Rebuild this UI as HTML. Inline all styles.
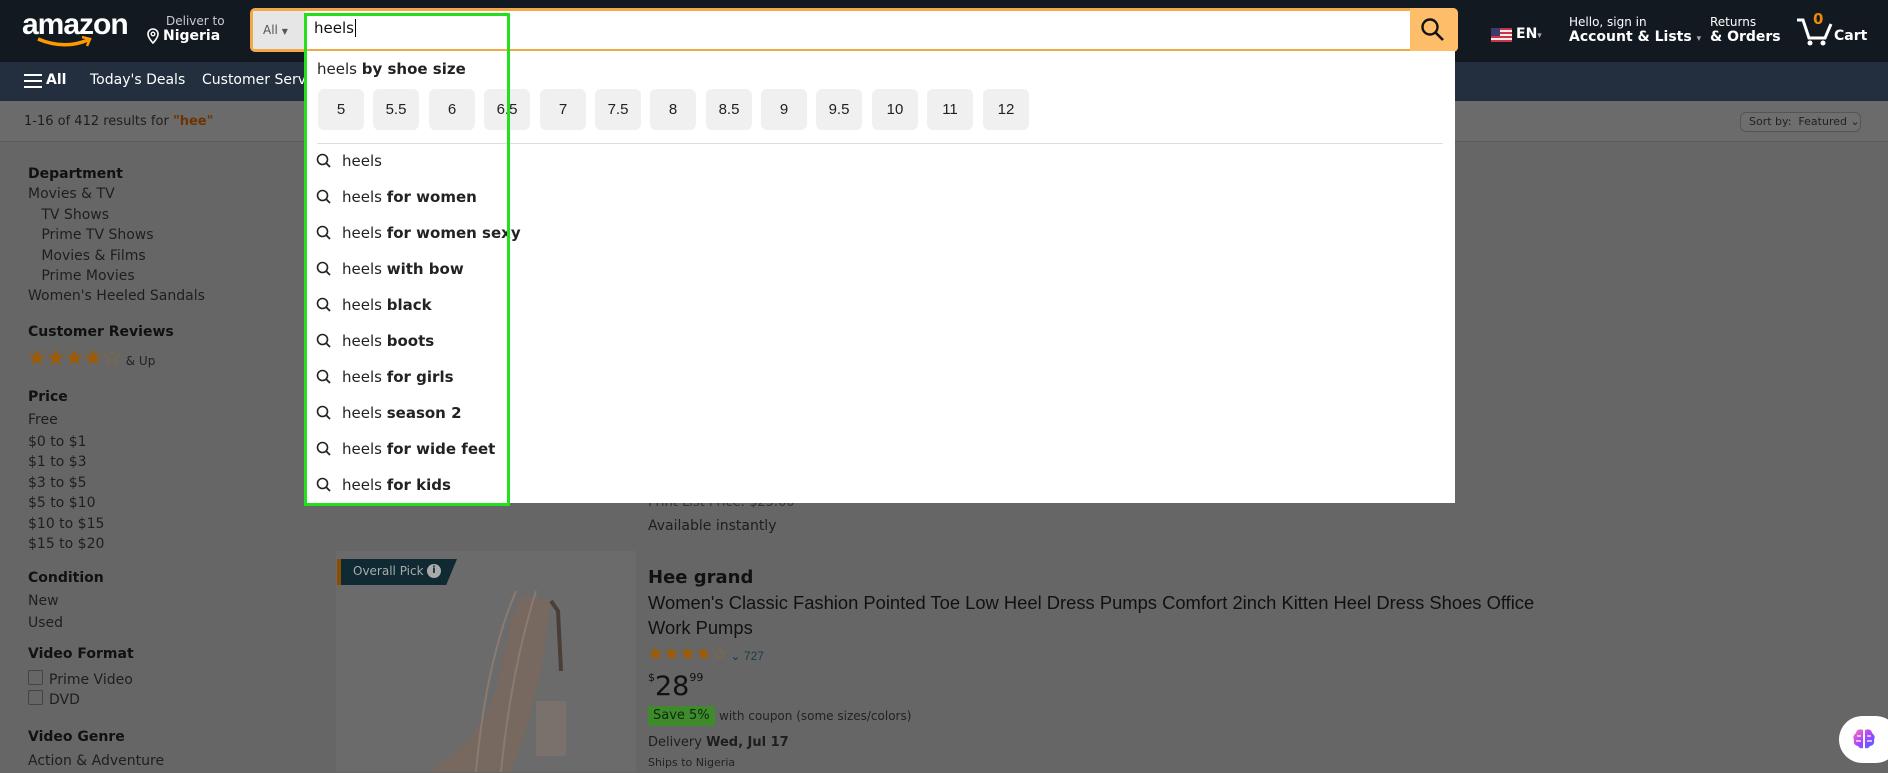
<!DOCTYPE html>
<html><head><meta charset="utf-8">
<style>
*{margin:0;padding:0;box-sizing:border-box}
body{width:1888px;height:772px;overflow:hidden;background:#666;font-family:"DejaVu Sans","Liberation Sans",sans-serif;position:relative;color:#1a1a1a}
.a{position:absolute;white-space:nowrap}
#hdr{position:absolute;left:0;top:0;width:1888px;height:62px;background:#131921}
#nav{position:absolute;left:0;top:62px;width:1888px;height:39px;background:#232f3e}
#res{position:absolute;left:0;top:101px;width:1888px;height:41px;background:#6b6b6b;border-bottom:1px solid #5a5a5a}
.w{color:#fff}
.side{font-size:14px;color:#1e1e1e}
.side b{font-size:14px;color:#111}
.sz{position:absolute;top:89px;width:46px;height:41px;background:#f0f0f0;border-radius:6px;font-size:15px;color:#222;text-align:center;line-height:41px;font-family:"Liberation Sans",sans-serif}
.sg{position:absolute;left:316px;width:1100px;font-size:15px;color:#222;height:36px;line-height:36px;white-space:nowrap}
.sg svg{position:absolute;left:0;top:10px}
.sg span{position:absolute;left:26px;top:0;white-space:nowrap}
.st{font-family:"Liberation Sans","DejaVu Sans",sans-serif;color:#a05a00}
</style></head><body>
<div id="hdr"></div>
<div class="a w" style="left:22px;top:8px;font:bold 30px 'Liberation Sans',sans-serif;letter-spacing:-1px">amazon</div>
<svg class="a" style="left:36px;top:36px" width="58" height="14"><path d="M2 3 Q28 14 52 4" stroke="#f90" stroke-width="3.5" fill="none"/><path d="M46 1 L54 3 L51 10" stroke="#f90" stroke-width="2.5" fill="none"/></svg>
<div class="a" style="left:166px;top:14px;font-size:12px;color:#ccc">Deliver to</div>
<svg class="a" style="left:147px;top:28px" width="12" height="16"><path d="M6 1 A5 5 0 0 1 11 6 C11 10 6 15 6 15 C6 15 1 10 1 6 A5 5 0 0 1 6 1Z" fill="none" stroke="#fff" stroke-width="1.6"/><circle cx="6" cy="6" r="1.8" fill="none" stroke="#fff" stroke-width="1.4"/></svg>
<div class="a w" style="left:163px;top:28px;font-size:14px;font-weight:bold">Nigeria</div>
<div class="a" style="left:250px;top:8px;width:1208px;height:44px;border:3px solid #f3a847;border-radius:5px;background:#fff"></div>
<div class="a" style="left:253px;top:11px;width:52px;height:38px;background:#e6e6e6;font-size:12px;color:#555;line-height:38px;padding-left:10px">All <span style="font-size:8px">▼</span></div>
<div class="a" style="left:314px;top:19px;font-size:15px;color:#111">heels<span style="border-left:1px solid #000;margin-left:1px"></span></div>
<div class="a" style="left:1410px;top:8px;width:48px;height:44px;background:#febd69;border-radius:0 5px 5px 0"></div>
<svg class="a" style="left:1420px;top:17px" width="26" height="26"><circle cx="10" cy="10" r="7.5" fill="none" stroke="#111" stroke-width="2.4"/><path d="M15.5 15.5 L23 23" stroke="#111" stroke-width="2.6"/></svg>
<svg class="a" style="left:1491px;top:28px" width="21" height="14"><rect width="21" height="14" fill="#eee"/><g fill="#c8344a"><rect y="0" width="21" height="2"/><rect y="4" width="21" height="2"/><rect y="8" width="21" height="2"/><rect y="12" width="21" height="2"/></g><rect width="9" height="8" fill="#3c3b6e"/></svg>
<div class="a w" style="left:1516px;top:26px;font-size:14px;font-weight:bold">EN<span style="font-size:9px;color:#aaa">▾</span></div>
<div class="a w" style="left:1569px;top:15px;font-size:12px">Hello, sign in</div>
<div class="a w" style="left:1569px;top:29px;font-size:14px;font-weight:bold">Account &amp; Lists <span style="font-size:9px;color:#aaa">▾</span></div>
<div class="a w" style="left:1710px;top:15px;font-size:12px">Returns</div>
<div class="a w" style="left:1710px;top:29px;font-size:14px;font-weight:bold">&amp; Orders</div>
<svg class="a" style="left:1795px;top:16px" width="40" height="30"><path d="M2 4 L8 4 L14 22 L30 22 L36 8" fill="none" stroke="#fff" stroke-width="3"/><circle cx="15" cy="27" r="2.5" fill="#fff"/><circle cx="28" cy="27" r="2.5" fill="#fff"/></svg>
<div class="a" style="left:1813px;top:10px;font-size:15px;font-weight:bold;color:#f08804">0</div>
<div class="a w" style="left:1834px;top:28px;font-size:14px;font-weight:bold">Cart</div>

<div id="nav"></div>
<svg class="a" style="left:24px;top:73px" width="18" height="16"><path d="M0 2H18M0 8H18M0 14H18" stroke="#fff" stroke-width="2"/></svg>
<div class="a w" style="left:46px;top:72px;font-size:14px;font-weight:bold">All</div>
<div class="a w" style="left:90px;top:72px;font-size:14px">Today's Deals</div>
<div class="a w" style="left:202px;top:72px;font-size:14px">Customer Service</div>

<div id="res"></div>
<div class="a" style="left:24px;top:114px;font-size:13px;color:#1e1e1e">1-16 of 412 results for <b style="color:#6b3400">"hee"</b></div>
<div class="a" style="left:1740px;top:112px;width:121px;height:20px;background:#6e6e6e;border:1px solid #555;border-radius:6px;font-size:11px;color:#222;line-height:18px;padding-left:8px">Sort by:&nbsp; Featured ⌄</div>

<div class="a side" style="left:28px;top:164px;line-height:20.4px">
<b>Department</b><br>Movies &amp; TV<br>&nbsp;&nbsp;&nbsp;TV Shows<br>&nbsp;&nbsp;&nbsp;Prime TV Shows<br>&nbsp;&nbsp;&nbsp;Movies &amp; Films<br>&nbsp;&nbsp;&nbsp;Prime Movies<br>Women's Heeled Sandals</div>
<div class="a side" style="left:28px;top:324px"><b>Customer Reviews</b></div>
<div class="a st" style="left:27px;top:345px;font-size:22px;letter-spacing:-1px">★★★★<span style="color:#8a6a3a">☆</span> <span style="font-size:12px;color:#222;letter-spacing:0;font-family:'DejaVu Sans',sans-serif">&amp; Up</span></div>
<div class="a side" style="left:28px;top:387px;line-height:20.5px"><b>Price</b><br><span style="line-height:24px">Free</span><br>$0 to $1<br>$1 to $3<br>$3 to $5<br>$5 to $10<br>$10 to $15<br>$15 to $20</div>
<div class="a side" style="left:28px;top:568px;line-height:20.5px"><b>Condition</b><br><span style="line-height:24px">New</span><br>Used</div>
<div class="a side" style="left:28px;top:646px"><b>Video Format</b></div>
<div class="a" style="left:28px;top:670px;width:15px;height:15px;border:1px solid #444;border-radius:2px"></div>
<div class="a" style="left:28px;top:690px;width:15px;height:15px;border:1px solid #444;border-radius:2px"></div>
<div class="a side" style="left:49px;top:670px;line-height:20px">Prime Video<br>DVD</div>
<div class="a side" style="left:28px;top:725px;line-height:24px"><b>Video Genre</b><br>Action &amp; Adventure</div>

<div class="a" style="left:336px;top:551px;width:300px;height:221px;background:#6b6b6b"></div>
<div class="a" style="left:337px;top:559px;width:120px;height:26px;background:#0f2a33;clip-path:polygon(0 0,100% 0,91% 100%,0 100%);border-left:4px solid #8a4f00"></div>
<div class="a" style="left:353px;top:564px;font-size:12px;color:#aaa">Overall Pick</div>
<div class="a" style="left:427px;top:564px;width:14px;height:14px;border-radius:50%;background:#aaa;color:#0f2a33;font-size:10px;text-align:center;line-height:14px;font-weight:bold">i</div>
<svg class="a" style="left:336px;top:551px" width="300" height="221"><path d="M185 45 L175 70 L160 140 Q145 180 120 200 L95 221 L175 221 L190 180 L205 120 L215 50 Z" fill="#776860"/><rect x="200" y="150" width="30" height="55" fill="#7a716c"/><path d="M215 50 L222 60 L225 120" stroke="#4a3e38" stroke-width="4" fill="none"/><path d="M180 40 Q150 110 140 221" stroke="#8a7a70" stroke-width="2" fill="none"/><path d="M200 40 Q175 120 165 221" stroke="#8a7a70" stroke-width="2" fill="none"/></svg>

<div class="a" style="left:648px;top:495px;font-size:13px;color:#333">Print List Price: $25.00</div>
<div class="a" style="left:648px;top:518px;font-size:14px;color:#1e1e1e">Available instantly</div>
<div class="a" style="left:648px;top:567px;font-size:18px;font-weight:bold;color:#111">Hee grand</div>
<div class="a" style="left:648px;top:591px;font-size:18px;color:#111;line-height:25px;font-family:'Liberation Sans',sans-serif;transform:scaleX(1.02);transform-origin:left">Women's Classic Fashion Pointed Toe Low Heel Dress Pumps Comfort 2inch Kitten Heel Dress Shoes Office<br>Work Pumps</div>
<div class="a st" style="left:647px;top:643px;font-size:19px;letter-spacing:-1px">★★★★<span style="color:#8a6a3a">☆</span><span style="font-size:12px;color:#1c3a4a;letter-spacing:0"> ⌄ 727</span></div>
<div class="a" style="left:648px;top:671px;color:#111"><span style="font-size:11px;vertical-align:top">$</span><span style="font-size:27px">28</span><span style="font-size:11px;vertical-align:top">99</span></div>
<div class="a" style="left:648px;top:706px;width:67px;height:20px;background:#3e8a2c;color:#0d2a0a;font-size:13px;line-height:20px;padding-left:5px">Save 5%</div>
<div class="a" style="left:719px;top:709px;font-size:12px;color:#222">with coupon (some sizes/colors)</div>
<div class="a" style="left:648px;top:735px;font-size:13px;color:#1e1e1e">Delivery <b>Wed, Jul 17</b></div>
<div class="a" style="left:648px;top:756px;font-size:11px;color:#222">Ships to Nigeria</div>

<div class="a" style="left:1839px;top:716px;width:60px;height:47px;background:#fff;border-radius:24px"></div>
<svg class="a" style="left:1852px;top:727px" width="24" height="24"><defs><linearGradient id="g" x1="0" x2="1" y1="0" y2="1"><stop offset="0" stop-color="#f7a"/><stop offset=".5" stop-color="#a4f"/><stop offset="1" stop-color="#46f"/></linearGradient></defs><path d="M11 3 Q5 1 4 6 Q0 9 2 13 Q1 18 6 19 Q8 22 11 21 Z M13 3 Q19 1 20 6 Q24 9 22 13 Q23 18 18 19 Q16 22 13 21 Z" fill="url(#g)"/><path d="M5 9 H9 M4 14 H9 M15 9 H19 M15 14 H20" stroke="#fff" stroke-width="1.2"/></svg>

<div class="a" style="left:305px;top:51px;width:1150px;height:452px;background:#fff"></div>
<div class="a" style="left:317px;top:60px;font-size:15px;color:#222">heels <b>by shoe size</b></div>
<div class="sz" style="left:318px">5</div><div class="sz" style="left:373px">5.5</div><div class="sz" style="left:429px">6</div><div class="sz" style="left:484px">6.5</div><div class="sz" style="left:540px">7</div><div class="sz" style="left:595px">7.5</div><div class="sz" style="left:650px">8</div><div class="sz" style="left:706px">8.5</div><div class="sz" style="left:761px">9</div><div class="sz" style="left:816px">9.5</div><div class="sz" style="left:872px">10</div><div class="sz" style="left:927px">11</div><div class="sz" style="left:983px">12</div>
<div class="a" style="left:317px;top:143px;width:1126px;height:1px;background:#ddd"></div>
<div class="sg" style="top:143px"><svg width="16" height="16"><circle cx="6.5" cy="6.5" r="5" fill="none" stroke="#222" stroke-width="1.6"/><path d="M10 10L14 14" stroke="#222" stroke-width="1.8"/></svg><span>heels</span></div>
<div class="sg" style="top:179px"><svg width="16" height="16"><circle cx="6.5" cy="6.5" r="5" fill="none" stroke="#222" stroke-width="1.6"/><path d="M10 10L14 14" stroke="#222" stroke-width="1.8"/></svg><span>heels <b>for women</b></span></div>
<div class="sg" style="top:215px"><svg width="16" height="16"><circle cx="6.5" cy="6.5" r="5" fill="none" stroke="#222" stroke-width="1.6"/><path d="M10 10L14 14" stroke="#222" stroke-width="1.8"/></svg><span>heels <b>for women sexy</b></span></div>
<div class="sg" style="top:251px"><svg width="16" height="16"><circle cx="6.5" cy="6.5" r="5" fill="none" stroke="#222" stroke-width="1.6"/><path d="M10 10L14 14" stroke="#222" stroke-width="1.8"/></svg><span>heels <b>with bow</b></span></div>
<div class="sg" style="top:287px"><svg width="16" height="16"><circle cx="6.5" cy="6.5" r="5" fill="none" stroke="#222" stroke-width="1.6"/><path d="M10 10L14 14" stroke="#222" stroke-width="1.8"/></svg><span>heels <b>black</b></span></div>
<div class="sg" style="top:323px"><svg width="16" height="16"><circle cx="6.5" cy="6.5" r="5" fill="none" stroke="#222" stroke-width="1.6"/><path d="M10 10L14 14" stroke="#222" stroke-width="1.8"/></svg><span>heels <b>boots</b></span></div>
<div class="sg" style="top:359px"><svg width="16" height="16"><circle cx="6.5" cy="6.5" r="5" fill="none" stroke="#222" stroke-width="1.6"/><path d="M10 10L14 14" stroke="#222" stroke-width="1.8"/></svg><span>heels <b>for girls</b></span></div>
<div class="sg" style="top:395px"><svg width="16" height="16"><circle cx="6.5" cy="6.5" r="5" fill="none" stroke="#222" stroke-width="1.6"/><path d="M10 10L14 14" stroke="#222" stroke-width="1.8"/></svg><span>heels <b>season 2</b></span></div>
<div class="sg" style="top:431px"><svg width="16" height="16"><circle cx="6.5" cy="6.5" r="5" fill="none" stroke="#222" stroke-width="1.6"/><path d="M10 10L14 14" stroke="#222" stroke-width="1.8"/></svg><span>heels <b>for wide feet</b></span></div>
<div class="sg" style="top:467px"><svg width="16" height="16"><circle cx="6.5" cy="6.5" r="5" fill="none" stroke="#222" stroke-width="1.6"/><path d="M10 10L14 14" stroke="#222" stroke-width="1.8"/></svg><span>heels <b>for kids</b></span></div>

<div class="a" style="left:304px;top:13px;width:206px;height:493px;border:3px solid #22e01e"></div>
</body></html>
